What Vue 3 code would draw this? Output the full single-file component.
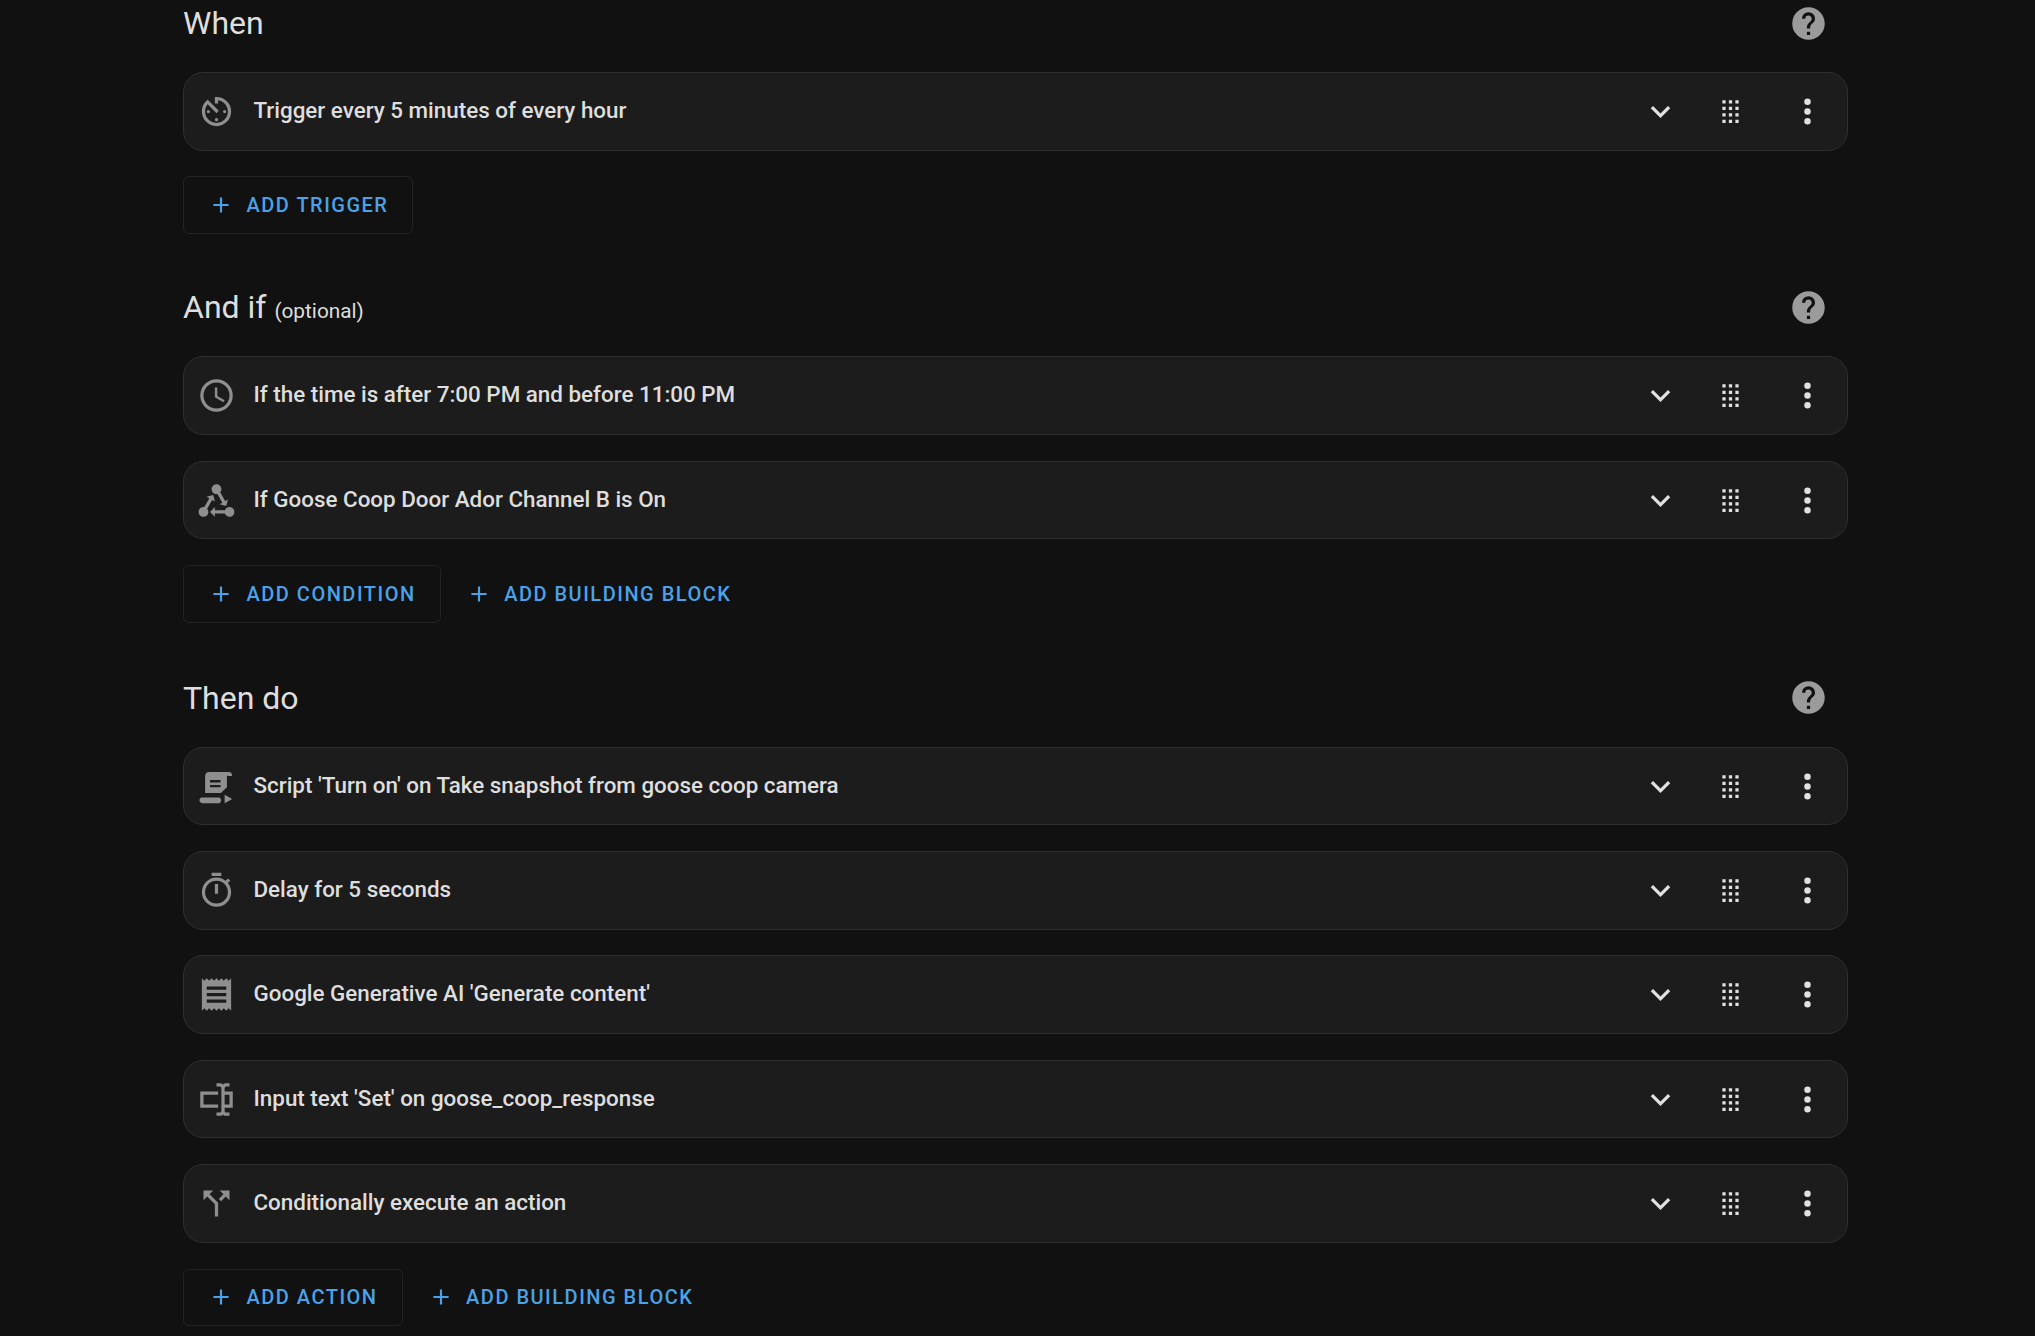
<template>
  <div class="page">
    <section v-for="section in sections" :key="section.title" class="section">
      <div class="head">
        <h2>{{ section.title }} <span v-if="section.note" class="note">{{ section.note }}</span></h2>
        <svg class="help" viewBox="0 0 24 24"><path :d="icons.help" /></svg>
      </div>
      <div class="row" v-for="row in section.rows" :key="row.text">
        <svg class="row-icon" viewBox="0 0 24 24"><path :d="icons[row.icon]" fill-rule="evenodd" /></svg>
        <div class="row-text">{{ row.text }}</div>
        <svg class="tool chevron" viewBox="0 0 24 24"><path :d="icons.chevron" /></svg>
        <svg class="tool drag" viewBox="0 0 24 24"><path :d="icons.drag" /></svg>
        <svg class="tool dots" viewBox="0 0 24 24"><path :d="icons.dots" /></svg>
      </div>
      <div class="buttons">
        <div class="btn outlined">
          <svg viewBox="0 0 24 24"><path :d="icons.plus" /></svg>
          <span>{{ section.add }}</span>
        </div>
        <div v-if="section.block" class="btn">
          <svg viewBox="0 0 24 24"><path :d="icons.plus" /></svg>
          <span>Add building block</span>
        </div>
      </div>
    </section>
  </div>
</template>

<script setup>
const icons = {
  help: 'M15.07,11.25L14.17,12.17C13.45,12.89 13,13.5 13,15H11V14.5C11,13.39 11.45,12.39 12.17,11.67L13.41,10.41C13.78,10.05 14,9.55 14,9C14,7.89 13.1,7 12,7A2,2 0 0,0 10,9H8A4,4 0 0,1 12,5A4,4 0 0,1 16,9C16,9.88 15.64,10.67 15.07,11.25M13,19H11V17H13M12,2A10,10 0 0,0 2,12A10,10 0 0,0 12,22A10,10 0 0,0 22,12C22,6.47 17.5,2 12,2Z',
  chevron: 'M7.41,8.58L12,13.17L16.59,8.58L18,10L12,16L6,10L7.41,8.58Z',
  drag: 'M7,19V17H9V19H7M11,19V17H13V19H11M15,19V17H17V19H15M7,15V13H9V15H7M11,15V13H13V15H11M15,15V13H17V15H15M7,11V9H9V11H7M11,11V9H13V11H11M15,11V9H17V11H15M7,7V5H9V7H7M11,7V5H13V7H11M15,7V5H17V7H15Z',
  dots: 'M12,16A2,2 0 0,1 14,18A2,2 0 0,1 12,20A2,2 0 0,1 10,18A2,2 0 0,1 12,16M12,10A2,2 0 0,1 14,12A2,2 0 0,1 12,14A2,2 0 0,1 10,12A2,2 0 0,1 12,10M12,4A2,2 0 0,1 14,6A2,2 0 0,1 12,8A2,2 0 0,1 10,6A2,2 0 0,1 12,4Z',
  plus: 'M19,13H13V19H11V13H5V11H11V5H13V11H19V13Z',
  timer: 'M11,17A1,1 0 0,0 12,18A1,1 0 0,0 13,17A1,1 0 0,0 12,16A1,1 0 0,0 11,17M11,3V7H13V5.08C16.39,5.57 19,8.47 19,12A7,7 0 0,1 12,19A7,7 0 0,1 5,12C5,10.32 5.59,8.78 6.58,7.58L12,13L13.41,11.59L6.61,4.79V4.81C4.42,6.45 3,9.05 3,12A9,9 0 0,0 12,21A9,9 0 0,0 21,12A9,9 0 0,0 12,3M18,12A1,1 0 0,0 17,11A1,1 0 0,0 16,12A1,1 0 0,0 17,13A1,1 0 0,0 18,12M6,12A1,1 0 0,0 7,13A1,1 0 0,0 8,12A1,1 0 0,0 7,11A1,1 0 0,0 6,12Z',
  clock: 'M12,20A8,8 0 0,0 20,12A8,8 0 0,0 12,4A8,8 0 0,0 4,12A8,8 0 0,0 12,20M12,2A10,10 0 0,1 22,12A10,10 0 0,1 12,22C6.47,22 2,17.5 2,12A10,10 0 0,1 12,2M12.5,7V12.25L17,14.92L16.25,16.15L11,13V7H12.5Z',
  state: 'M6.27 17.05C6.72 17.58 7 18.25 7 19C7 20.66 5.66 22 4 22S1 20.66 1 19 2.34 16 4 16C4.18 16 4.36 16 4.53 16.05L7.6 10.69L5.86 9.7L9.95 8.58L11.07 12.67L9.33 11.68L6.27 17.05M20 16C18.7 16 17.6 16.84 17.18 18H11V16L8 19L11 22V20H17.18C17.6 21.16 18.7 22 20 22C21.66 22 23 20.66 23 19S21.66 16 20 16M12 8C12.18 8 12.36 8 12.53 7.95L15.6 13.31L13.86 14.3L17.95 15.42L19.07 11.33L17.33 12.32L14.27 6.95C14.72 6.42 15 5.75 15 5C15 3.34 13.66 2 12 2S9 3.34 9 5 10.34 8 12 8Z',
  script: 'M7.5 3H19.5C20.8 3 21.7 4 21.7 5.5H19.2C19 5 18.4 5 18.4 5.8V12.5L14.7 16H5V5.5C5 4 6 3 7.5 3ZM8 8V9.5H14.5V8ZM8 11V12.5H14.5V11ZM2.5 18.8H14L15 20.5L14 22.3H3.5C2.5 22.3 1.5 21.5 1.5 20.5C1.5 19.8 2 19.2 2.5 18.8ZM17 17V22.3L21.7 19.7Z',
  stopwatch: 'M12,20A7,7 0 0,1 5,13A7,7 0 0,1 12,6A7,7 0 0,1 19,13A7,7 0 0,1 12,20M19.03,7.39L20.45,5.97C20,5.46 19.55,5 19.04,4.56L17.62,6C16.07,4.74 14.12,4 12,4A9,9 0 0,0 3,13A9,9 0 0,0 12,22C17,22 21,17.97 21,13C21,10.88 20.26,8.93 19.03,7.39M11,14H13V8H11M15,1H9V3H15V1Z',
  receipt: 'M3,22L4.5,20.5L6,22L7.5,20.5L9,22L10.5,20.5L12,22L13.5,20.5L15,22L16.5,20.5L18,22L19.5,20.5L21,22V2L19.5,3.5L18,2L16.5,3.5L15,2L13.5,3.5L12,2L10.5,3.5L9,2L7.5,3.5L6,2L4.5,3.5L3,2M18,9H6V7H18M18,13H6V11H18M18,17H6V15H18V17Z',
  textbox: 'M17,7H22V17H17V19A1,1 0 0,0 18,20H20V22H17.5C16.95,22 16,21.55 16,21C16,21.55 15.05,22 14.5,22H12V20H14A1,1 0 0,0 15,19V5A1,1 0 0,0 14,4H12V2H14.5C15.05,2 16,2.45 16,3C16,2.45 16.95,2 17.5,2H20V4H18A1,1 0 0,0 17,5V7M2,7H13V9H4V15H13V17H2V7M20,15V9H17V15H20Z',
  split: 'M14,4L16.29,6.29L13.41,9.17L14.83,10.59L17.71,7.71L20,10V4M10,4H4V10L6.29,7.71L11,12.41V20H13V11.59L7.71,6.29',
}

const sections = [
  {
    title: 'When',
    add: 'Add trigger',
    rows: [{ icon: 'timer', text: 'Trigger every 5 minutes of every hour' }],
  },
  {
    title: 'And if',
    note: '(optional)',
    add: 'Add condition',
    block: true,
    rows: [
      { icon: 'clock', text: 'If the time is after 7:00 PM and before 11:00 PM' },
      { icon: 'state', text: 'If Goose Coop Door Ador Channel B is On' },
    ],
  },
  {
    title: 'Then do',
    add: 'Add action',
    block: true,
    rows: [
      { icon: 'script', text: "Script 'Turn on' on Take snapshot from goose coop camera" },
      { icon: 'stopwatch', text: 'Delay for 5 seconds' },
      { icon: 'receipt', text: "Google Generative AI 'Generate content'" },
      { icon: 'textbox', text: "Input text 'Set' on goose_coop_response" },
      { icon: 'split', text: 'Conditionally execute an action' },
    ],
  },
]
</script>

<style scoped>
.page {
  width: 1665px;
  margin-left: 183px;
  font-family: Roboto, "Liberation Sans", sans-serif;
}
.section {
  margin-bottom: 50.4px;
  display: flex;
  flex-direction: column;
  gap: 25.8px;
}
.section:nth-child(2) {
  margin-bottom: 52px;
}
.head {
  height: 46.2px;
  display: flex;
  align-items: center;
  justify-content: space-between;
  padding-right: 20px;
}
h2 {
  margin: 0;
  font-size: 32px;
  font-weight: 400;
  color: #dedede;
}
.note {
  font-size: 20.8px;
}
.help {
  width: 39px;
  height: 39px;
  fill: #9b9b9b;
}
.row {
  height: 78.6px;
  box-sizing: border-box;
  display: flex;
  align-items: center;
  padding-left: 13px;
  background: #1c1c1c;
  border: 1.5px solid #2f2f2f;
  border-radius: 20px;
}
.row-icon {
  width: 39px;
  height: 39px;
  fill: #8f8f8f;
  flex: none;
}
.row-text {
  flex: 1;
  margin-left: 17.5px;
  margin-top: -3px;
  font-size: 22.4px;
  font-weight: 500;
  color: #dedede;
}
.tool {
  width: 39px;
  height: 39px;
  fill: #e1e1e1;
  flex: none;
}
.drag {
  margin-left: 31px;
}
.dots {
  margin-left: 38px;
  margin-right: 20px;
}
.buttons {
  display: flex;
}
.btn {
  height: 57.6px;
  box-sizing: border-box;
  display: flex;
  align-items: center;
  gap: 12.5px;
  padding: 0 24px;
  border: 1.5px solid transparent;
  border-radius: 6px;
  color: #4aa3e8;
  font-size: 20px;
  font-weight: 500;
  letter-spacing: 1.5px;
  text-transform: uppercase;
}
.btn.outlined {
  border-color: #232323;
}
.btn svg {
  width: 26px;
  height: 26px;
  fill: #4aa3e8;
}
</style>

<style>
body {
  background: #111111;
}
</style>
